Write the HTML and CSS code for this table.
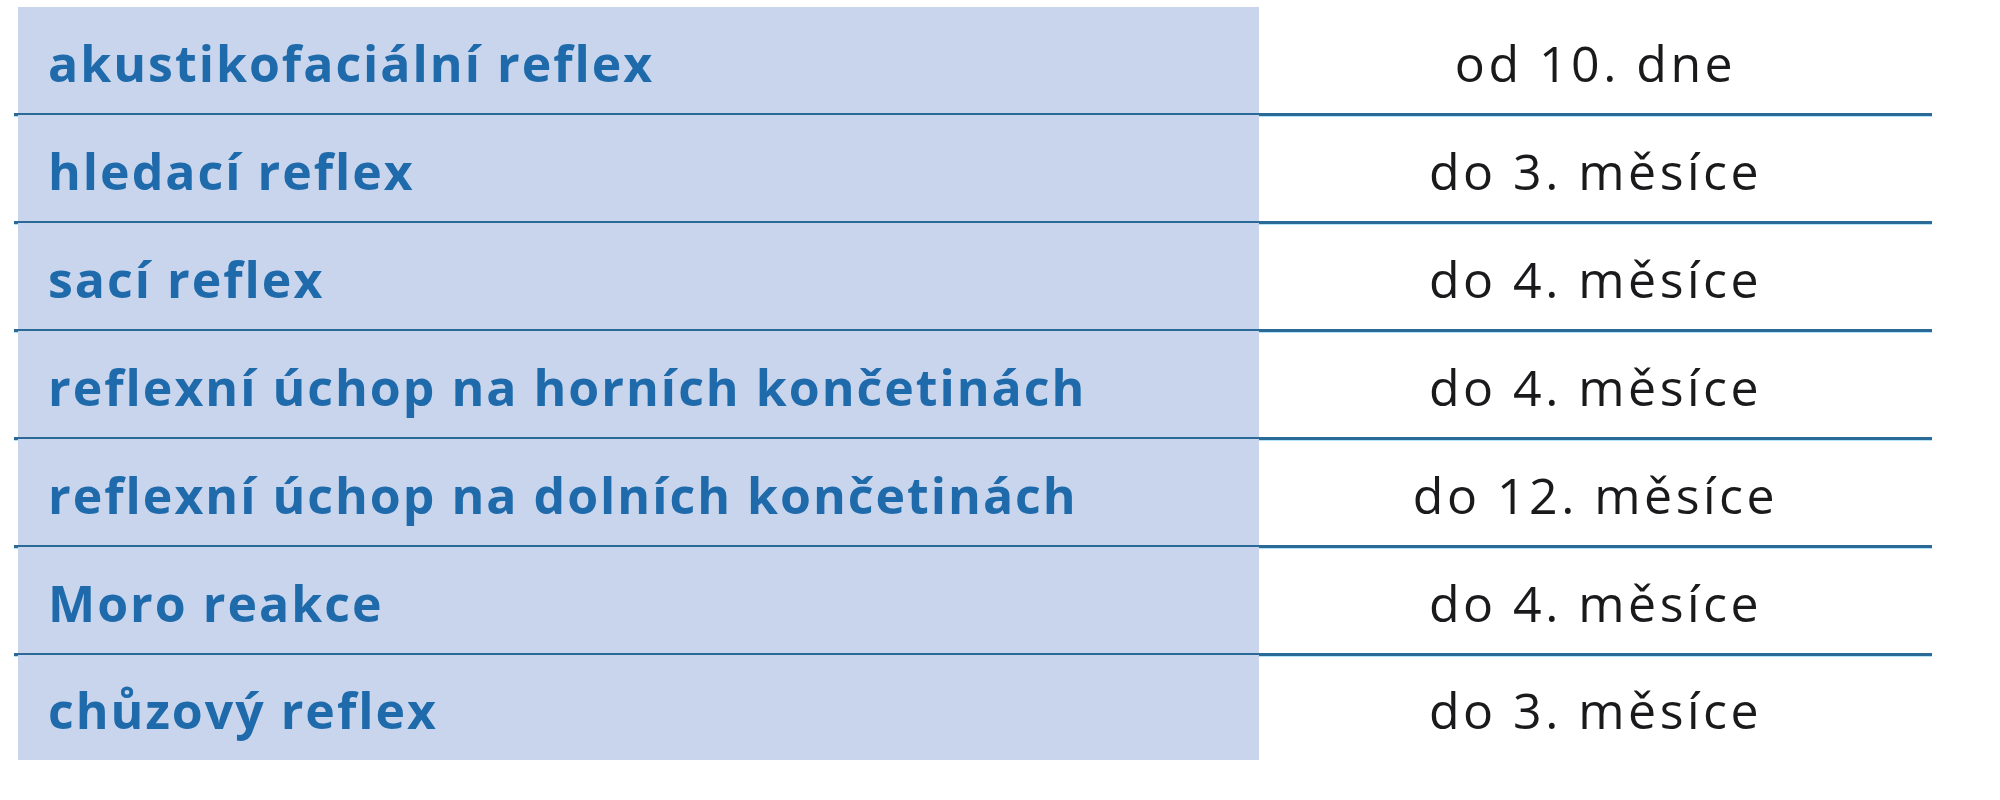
FILE: index.html
```html
<!DOCTYPE html>
<html lang="cs">
<head>
<meta charset="utf-8">
<title>Reflexy</title>
<link rel="stylesheet" href="styles.css">
</head>
<body>
<div class="table">
  <div class="row"><div class="name">akustikofaciální reflex</div><div class="age">od 10. dne</div></div>
  <div class="row"><div class="name">hledací reflex</div><div class="age">do 3. měsíce</div></div>
  <div class="row"><div class="name">sací reflex</div><div class="age">do 4. měsíce</div></div>
  <div class="row"><div class="name">reflexní úchop na horních končetinách</div><div class="age">do 4. měsíce</div></div>
  <div class="row"><div class="name">reflexní úchop na dolních končetinách</div><div class="age">do 12. měsíce</div></div>
  <div class="row"><div class="name">Moro reakce</div><div class="age">do 4. měsíce</div></div>
  <div class="row"><div class="name">chůzový reflex</div><div class="age">do 3. měsíce</div></div>
</div>
</body>
</html>
```

FILE: styles.css
```css
html, body {
  margin: 0;
  padding: 0;
  background: #ffffff;
}

.table {
  margin: 8px 0 0 14px;
  width: 1918px;
  display: flex;
  flex-direction: column;
}

.row {
  display: flex;
  height: 108px;
  box-sizing: border-box;
  border-bottom: 3px solid #2b6996;
  box-shadow: 0 1px 0 #b4e2f8;
}

.row:last-child {
  border-bottom: none;
  box-shadow: none;
  height: 104px;
}

.name {
  margin-left: 4px;
  width: 1241px;
  background: #c8d5ec;
  box-shadow: 0 -1px 0 #c8d5ec;
  display: flex;
  align-items: center;
  padding-left: 30px;
  padding-top: 4px;
  box-sizing: border-box;
  font-family: "Open Sans", "Lato", sans-serif;
  font-weight: 700;
  font-size: 50px;
  letter-spacing: 2px;
  color: #1f6aab;
}

.age {
  flex: 1;
  display: flex;
  align-items: center;
  justify-content: center;
  padding-top: 4px;
  font-family: "Open Sans", "Lato", sans-serif;
  font-weight: 400;
  font-size: 50px;
  letter-spacing: 3.5px;
  color: #1a1a1c;
}
```
